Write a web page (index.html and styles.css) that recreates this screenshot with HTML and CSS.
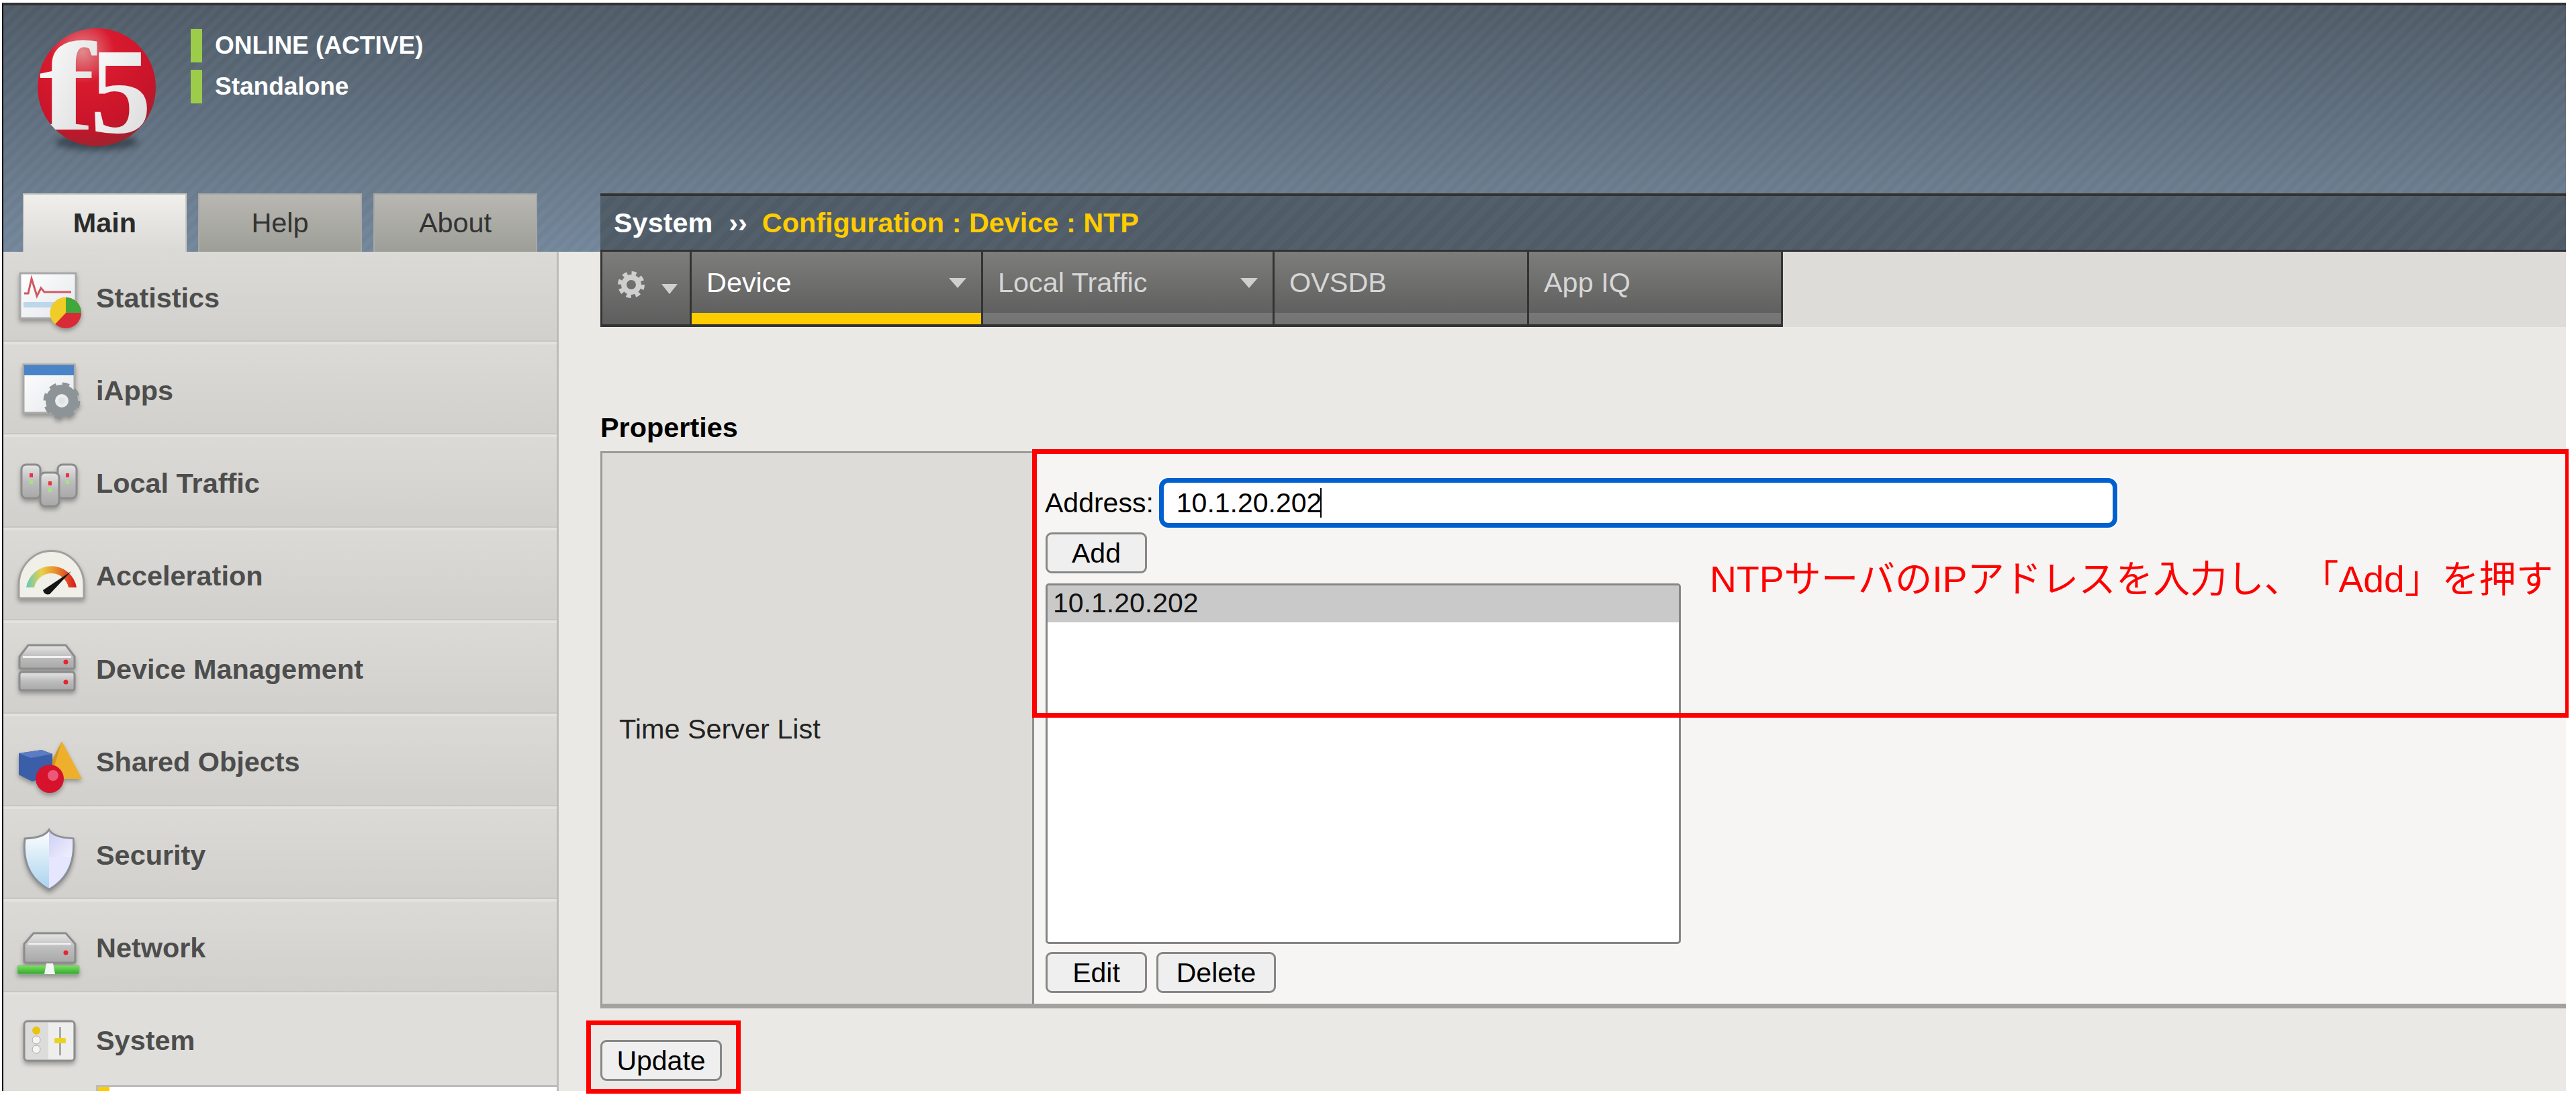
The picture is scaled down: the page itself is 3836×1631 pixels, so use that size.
FILE: index.html
```html
<!DOCTYPE html>
<html lang="ja">
<head>
<meta charset="utf-8">
<title>System : Configuration : Device : NTP</title>
<link rel="stylesheet" href="styles.css">
</head>
<body>
<svg class="defs" aria-hidden="true">
  <defs>
    <radialGradient id="ball" cx="0.38" cy="0.2" r="0.9"><stop offset="0" stop-color="#e08a8e"/><stop offset="0.3" stop-color="#d91a2e"/><stop offset="0.7" stop-color="#c8142a"/><stop offset="1" stop-color="#8e2a30"/></radialGradient>
    <linearGradient id="white" x1="0" y1="0" x2="1" y2="1"><stop offset="0" stop-color="#ffffff"/><stop offset="1" stop-color="#d8d8d8"/></linearGradient>
    <linearGradient id="metal" x1="0" y1="0" x2="0" y2="1"><stop offset="0" stop-color="#e6e6e6"/><stop offset="0.5" stop-color="#bdbdbd"/><stop offset="1" stop-color="#a8a8a8"/></linearGradient>
    <linearGradient id="paper" x1="0" y1="0" x2="1" y2="1"><stop offset="0" stop-color="#ffffff"/><stop offset="1" stop-color="#e4e6ea"/></linearGradient>
    <linearGradient id="dial" x1="0" y1="0" x2="1" y2="0"><stop offset="0" stop-color="#5cc8c0"/><stop offset="0.3" stop-color="#e8d24a"/><stop offset="0.6" stop-color="#e88a2a"/><stop offset="1" stop-color="#d8161e"/></linearGradient>
    <linearGradient id="shield" x1="0" y1="0" x2="0" y2="1"><stop offset="0" stop-color="#ffffff"/><stop offset="1" stop-color="#a8d2ee"/></linearGradient>
    <linearGradient id="shield2" x1="0" y1="0" x2="1" y2="1"><stop offset="0" stop-color="#cfcff5"/><stop offset="1" stop-color="#f0f0ff"/></linearGradient>
    <linearGradient id="pipe" x1="0" y1="0" x2="0" y2="1"><stop offset="0" stop-color="#7fe060"/><stop offset="1" stop-color="#2fa82f"/></linearGradient>
    <clipPath id="sphere"><circle cx="94" cy="94" r="88"/></clipPath>
  </defs>
</svg>
<div class="page">
  <header class="masthead">
    <div class="brand">
      <svg class="logo" viewBox="0 -20 190 240" role="img" aria-label="F5">
        <ellipse class="logo-shadow" cx="94" cy="176" rx="62" ry="12"/>
        <circle cx="94" cy="94" r="88" fill="url(#ball)"/>
        <g clip-path="url(#sphere)">
          <text class="logo-f" x="0" y="157" transform="translate(8 0) scale(1.34 1)">f</text>
          <text class="logo-5" x="0" y="161" transform="translate(84 0)">5</text>
        </g>
      </svg>
      <div class="status">
        <div class="status-row"><span class="status-bar"></span><span>ONLINE (ACTIVE)</span></div>
        <div class="status-row"><span class="status-bar"></span><span>Standalone</span></div>
      </div>
    </div>
    <nav class="tabs">
      <a class="tab is-active">Main</a>
      <a class="tab">Help</a>
      <a class="tab">About</a>
    </nav>
    <div class="crumb">
      <span class="crumb-root">System</span>
      <span class="crumb-sep">››</span>
      <span class="crumb-path">Configuration : Device : NTP</span>
    </div>
  </header>

  <div class="workspace">
    <aside class="sidebar">
      <div class="side-row side-first">
        <svg class="icon" viewBox="0 0 110 100"><rect x="8" y="12" width="83" height="67" fill="url(#paper)" stroke="#a9a9a9" stroke-width="3"/><rect x="13" y="55" width="66" height="8" fill="#bcd6ea"/><path d="M14 42 L20 42 L25 20 L33 46 L39 34 L44 40 L84 40" fill="none" stroke="#cf5a60" stroke-width="3"/><circle cx="76" cy="71" r="23" fill="#d92a38"/><path d="M76 71 L76 48 A23 23 0 0 1 99 71 Z" fill="#3fa83a"/><path d="M76 71 L76 48 A23 23 0 0 0 60 88 Z" fill="#f0cc28"/></svg>
        <span>Statistics</span>
      </div>
      <div class="side-row">
        <svg class="icon" viewBox="0 0 110 100"><rect x="13" y="11" width="76" height="72" fill="url(#paper)" stroke="#a9a9a9" stroke-width="3"/><rect x="14" y="12" width="74" height="15" fill="#4a84c8"/><g transform="translate(70 65)"><circle r="17" fill="none" stroke="#8d9497" stroke-width="14"/><circle r="24" fill="none" stroke="#8d9497" stroke-width="7" stroke-dasharray="10 8.85"/><circle r="5" fill="#dfe3e4"/></g></svg>
        <span>iApps</span>
      </div>
      <div class="side-row">
        <svg class="icon" viewBox="0 0 110 100"><g stroke="#8c8c8c" stroke-width="3" fill="url(#metal)"><rect x="10" y="21" width="28" height="50" rx="7"/><rect x="64" y="21" width="28" height="50" rx="7"/><rect x="38" y="33" width="28" height="50" rx="7"/></g><g fill="#e8343c"><rect x="22" y="34" width="5" height="6"/><rect x="76" y="34" width="5" height="6"/><rect x="50" y="46" width="5" height="6"/></g><g fill="#a6e08a"><rect x="22" y="44" width="5" height="6"/><rect x="76" y="44" width="5" height="6"/><rect x="50" y="56" width="5" height="6"/></g></svg>
        <span>Local Traffic</span>
      </div>
      <div class="side-row">
        <svg class="icon" viewBox="0 0 110 100"><path d="M6 80 V62 A48 50 0 0 1 103 62 V80 Q103 82 100 82 H9 Q6 82 6 80 Z" fill="#f0efe8" stroke="#a0a0a0" stroke-width="3"/><path d="M17 66 A38 38 0 0 1 92 66 H80 A26 26 0 0 0 29 66 Z" fill="url(#dial)"/><path d="M42 70 L84 42 L52 76 Q44 78 42 70 Z" fill="#151515"/></svg>
        <span>Acceleration</span>
      </div>
      <div class="side-row">
        <svg class="icon" viewBox="0 0 110 100"><g stroke="#8c8c8c" stroke-width="3"><path d="M7 47 V31 L20 14 H76 L89 31 V47 Q89 49 86 49 H10 Q7 49 7 47 Z" fill="url(#metal)"/><path d="M7 78 V58 Q7 54 11 54 H85 Q89 54 89 58 V78 Q89 81 86 81 H10 Q7 81 7 78 Z" fill="url(#metal)"/></g><rect x="12" y="30" width="72" height="3" fill="#f2f2f2"/><circle cx="76" cy="39" r="3.5" fill="#e8242c"/><circle cx="76" cy="69" r="3.5" fill="#e8242c"/></svg>
        <span>Device Management</span>
      </div>
      <div class="side-row">
        <svg class="icon" viewBox="0 0 110 100"><path d="M70 18 L100 74 L53 74 Z" fill="#eeb02c"/><path d="M70 18 L53 74 L42 74 Z" fill="#d6961c"/><path d="M6 36 L40 31 L56 37 L56 68 L26 78 L6 68 Z" fill="#3a5ea8"/><path d="M6 36 L40 31 L56 37 L24 43 Z" fill="#5b7cc2"/><ellipse cx="52" cy="74" rx="21" ry="21" fill="#d6122c"/><ellipse cx="57" cy="69" rx="8" ry="8" fill="#ea5a78"/></svg>
        <span>Shared Objects</span>
      </div>
      <div class="side-row">
        <svg class="icon" viewBox="0 0 110 100"><path d="M51 12 Q58 24 87 25 Q92 78 51 101 Q9 78 15 25 Q44 24 51 12 Z" fill="url(#shield)" stroke="#8c8f96" stroke-width="3"/><path d="M51 14 Q58 25 86 26 Q87 38 84 53 H51 Z" fill="url(#shield2)"/><path d="M51 53 H84 Q77 84 51 99 Z" fill="#e6e6ff"/></svg>
        <span>Security</span>
      </div>
      <div class="side-row">
        <svg class="icon" viewBox="0 0 110 100"><path d="M14 68 V43 L28 27 H76 L90 43 V68 Q90 71 87 71 H17 Q14 71 14 68 Z" fill="url(#metal)" stroke="#8c8c8c" stroke-width="3"/><rect x="20" y="42" width="64" height="2" fill="#f4f4f4"/><circle cx="76" cy="56" r="3.5" fill="#e8242c"/><rect x="4" y="75" width="92" height="13" rx="2" fill="url(#pipe)" stroke="#8ab88a"/><path d="M44 88 L47 72 H57 L60 88 Z" fill="#f5f5f5"/></svg>
        <span>Network</span>
      </div>
      <div class="side-row side-last">
        <svg class="icon" viewBox="0 0 110 100"><rect x="14" y="21" width="75" height="59" rx="5" fill="#dcdcda" stroke="#8c8c8c" stroke-width="3"/><rect x="50" y="23" width="37" height="55" fill="#eeeeec"/><rect x="66" y="30" width="3" height="42" fill="#a8a8a8"/><rect x="59" y="46" width="17" height="8" rx="2" fill="#e8d420"/><circle cx="32" cy="35" r="6" fill="#e8c410"/><circle cx="32" cy="49" r="6" fill="#f4f4f4" stroke="#a8a8a8"/><circle cx="32" cy="63" r="6" fill="#f4f4f4" stroke="#a8a8a8"/></svg>
        <span>System</span>
      </div>
      <div class="subnav"><span class="subnav-mark"></span></div>
    </aside>

    <main class="content">
      <div class="menu-band">
        <nav class="menu">
          <div class="menu-item menu-gear">
            <svg class="gear" viewBox="0 0 44 44"><circle cx="22" cy="22" r="11" fill="none" stroke="#cfcfcf" stroke-width="8"/><circle cx="22" cy="22" r="17" fill="none" stroke="#cfcfcf" stroke-width="6" stroke-dasharray="7 6.35"/></svg>
            <span class="caret-down caret-small"></span>
          </div>
          <div class="menu-item menu-wide is-current"><span>Device</span><span class="caret-down"></span></div>
          <div class="menu-item menu-wide"><span>Local Traffic</span><span class="caret-down"></span></div>
          <div class="menu-item menu-mid"><span>OVSDB</span></div>
          <div class="menu-item menu-mid menu-end"><span>App IQ</span></div>
        </nav>
      </div>
      <h2 class="section-title">Properties</h2>
      <div class="props">
        <div class="props-label">Time Server List</div>
        <div class="props-value">
          <div class="addr-row">
            <label class="addr-label" for="addr">Address:</label>
            <div class="addr-box"><input class="addr-input" id="addr" type="text" value="10.1.20.202"><span class="text-caret"></span></div>
          </div>
          <button class="btn btn-small btn-add" type="button">Add</button>
          <div class="server-list"><div class="server-item">10.1.20.202</div></div>
          <div class="btn-row">
            <button class="btn btn-small" type="button">Edit</button>
            <button class="btn btn-delete" type="button">Delete</button>
          </div>
        </div>
      </div>
      <button class="btn btn-update" type="button">Update</button>
    </main>
  </div>
</div>
<div class="callout callout-form"><p class="callout-text">NTPサーバのIPアドレスを入力し、「Add」を押す</p></div>
<div class="callout callout-update"></div>
</body>
</html>
```

FILE: styles.css
```css
* { box-sizing: border-box; }
html, body { margin: 0; padding: 0; height: 100%; overflow: hidden; background: #fff; }
body { position: relative; font-family: "Liberation Sans", Arial, sans-serif; font-size: 41.4px; color: #222; }
.defs { position: absolute; width: 0; height: 0; }

.page { width: 3818px; height: 1621px; margin: 4px 0 0 3px; border-left: 2px solid #111; border-top: 4px solid #333; overflow: hidden; display: flex; flex-direction: column; }

/* masthead */
.masthead { height: 367px; flex: none; display: grid; grid-template-columns: 829px 1fr; grid-template-rows: 280px 87px;
  background:
    repeating-linear-gradient(135deg, rgba(255,255,255,.022) 0 7px, rgba(0,0,0,.012) 7px 14px),
    linear-gradient(180deg, #505c68 0%, #5c6b7a 35%, #74879b 100%); }
.brand { grid-column: 1 / 3; display: flex; align-items: flex-start; min-height: 0; }
.logo { width: 190px; height: 240px; margin: 8px 0 0 45px; flex: none; }
.logo-shadow { fill: rgba(30,36,44,.55); filter: blur(5px); }
.logo-f, .logo-5 { font-family: "Liberation Serif", serif; font-weight: 700; fill: url(#white); }
.logo-f { font-size: 188px; }
.logo-5 { font-size: 183px; }
.status { margin: 35px 0 0 44px; display: flex; flex-direction: column; gap: 11px; }
.status-row { display: flex; align-items: center; gap: 19px; height: 50px; font-size: 37px; font-weight: 700; color: #fff; }
.status-bar { width: 17px; height: 50px; background: #9ccc4a; }

.tabs { display: flex; gap: 17px; padding-left: 29px; align-items: stretch; }
.tab { width: 244px; display: flex; align-items: center; justify-content: center; color: #333;
  background: linear-gradient(180deg, #b8b7b1, #9e9e98); border: 2px solid #a9a9a5; border-bottom: 0; }
.tab.is-active { font-weight: 700; color: #2b2b2b; background: linear-gradient(180deg, #f0efec, #dad9d5); border-color: #c9c8c4; }

.crumb { margin-left: 60px; display: flex; align-items: center; padding-left: 20px; font-weight: 700; color: #fff;
  border-top: 4px solid #333; border-bottom: 3px solid #333;
  background: repeating-linear-gradient(135deg, rgba(255,255,255,.02) 0 10px, rgba(0,0,0,.015) 10px 20px), #505d69; }
.crumb-sep { margin: 0 22px 0 24px; }
.crumb-path { color: #ffcc00; }

/* layout */
.workspace { flex: 1; min-height: 0; display: flex; }

/* sidebar */
.sidebar { width: 827px; flex: none; display: flex; flex-direction: column; background: #dfdeda; border-right: 3px solid #bdbcb8; overflow: hidden; }
.side-row { height: 138.4px; flex: none; display: flex; align-items: center; gap: 11px; padding: 4px 0 0 17px; font-weight: 700; color: #4d4d4d;
  background: linear-gradient(180deg, #dbdad6, #d1d0cc); border-bottom: 4px solid #e3e2de; box-shadow: inset 0 -2px 0 #c7c6c2; }
.side-first { height: 138px; padding-top: 5px; }
.side-last { height: 134px; padding-top: 3px; background: #dfdeda; border-bottom: 0; box-shadow: none; }
.icon { width: 110px; height: 100px; flex: none; overflow: visible; filter: blur(.7px) drop-shadow(0 4px 3px rgba(0,0,0,.3)); }
.subnav { flex: 1; margin-left: 138px; background: #fff; border-top: 3px solid #bcbcbc; border-left: 3px solid #bcbcbc; }
.subnav-mark { display: block; width: 17px; height: 100%; background: #ffcc00; }

/* content */
.content { flex: 1; min-width: 0; padding-left: 62px; background: #eae9e5; }
.menu-band { height: 112px; background: #dedcd8; display: flex; }
.menu { display: flex; gap: 3px; padding: 0 3px; background: #333; border-bottom: 4px solid #333; }
.menu-item { display: flex; align-items: flex-start; justify-content: space-between; height: 108px; padding: 27px 0 0 22px; color: #d6d6d6; line-height: 38px;
  background: linear-gradient(180deg, #7d7d7b 0, #606060 91px, #777 91px, #747474 100%); }
.menu-gear { width: 130px; padding: 27px 18px 0 21px; background: linear-gradient(180deg, #7d7d7b, #5e5e5e); }
.gear { width: 44px; height: 44px; flex: none; }
.menu-wide { width: 431px; padding-right: 22px; }
.menu-mid { width: 376px; justify-content: flex-start; }
.menu-end { width: 375px; }
.menu-item.is-current { color: #fff; background: linear-gradient(180deg, #7d7d7b 0, #606060 91px, #ffcc00 91px, #ffcc00 100%); }
.caret-down { width: 0; height: 0; margin-top: 12px; border-left: 13px solid transparent; border-right: 13px solid transparent; border-top: 15px solid #cfcfcf; }
.caret-small { margin-top: 21px; border-left-width: 12px; border-right-width: 12px; }

.section-title { margin: 126px 0 11px; font-size: 41.4px; line-height: 48px; font-weight: 700; color: #000; }
.props { height: 830px; display: grid; grid-template-columns: 643px 1fr; border-top: 3px solid #9b9b97; border-left: 3px solid #9b9b97; border-bottom: 7px solid #a3a29e; }
.props-label { display: flex; align-items: center; padding-left: 25px; padding-top: 3px; background: #dedcd8; border-right: 3px solid #8e8e8a; }
.props-value { display: flex; flex-direction: column; align-items: flex-start; padding: 37px 0 0 17px; background: #f6f5f3; font-size: 41px; }
.addr-row { display: flex; align-items: center; gap: 8px; height: 74px; color: #000; }
.addr-label { margin-left: -1px; }
.addr-box { width: 1427px; height: 74px; display: flex; align-items: center; padding-left: 19px; background: #fff; border: 7px solid #0060d0; border-radius: 14px; box-shadow: 0 0 0 2px #fff; }
.addr-input { width: 214px; padding: 0; border: 0; outline: 0; background: transparent; font: inherit; color: #000; }
.text-caret { width: 2px; height: 44px; background: #000; }

.btn { height: 61px; padding: 1px 0 0; font-family: inherit; font-size: 41px; color: #000; background: #efefef; border: 3px solid #878787; border-radius: 9px; }
.btn-small { width: 151px; }
.btn-delete { width: 178px; }
.btn-add { margin-top: 7px; }
.btn-update { width: 181px; margin-top: 47px; }
.btn-row { display: flex; gap: 14px; margin-top: 12px; }

.server-list { width: 946px; height: 537px; margin-top: 15px; background: #fff; border: 3px solid #858585; border-radius: 5px; padding-top: 0; overflow: hidden; }
.server-item { height: 55px; line-height: 52px; padding-left: 8px; background: #c9c9c9; color: #111; }

/* annotations */
.callout { position: absolute; border: 7px solid #ff0000; pointer-events: none; }
.callout-form { left: 1537px; top: 669px; width: 2288px; height: 400px; border-right-width: 5px; }
.callout-update { left: 873px; top: 1520px; width: 230px; height: 109px; }
.callout-text { position: absolute; left: 1002px; top: 152px; margin: 0; white-space: nowrap; color: #ff0000; font-size: 55.3px; line-height: 70px; text-spacing-trim: space-all; font-family: "Liberation Sans", "Noto Sans CJK JP", sans-serif; }
```
